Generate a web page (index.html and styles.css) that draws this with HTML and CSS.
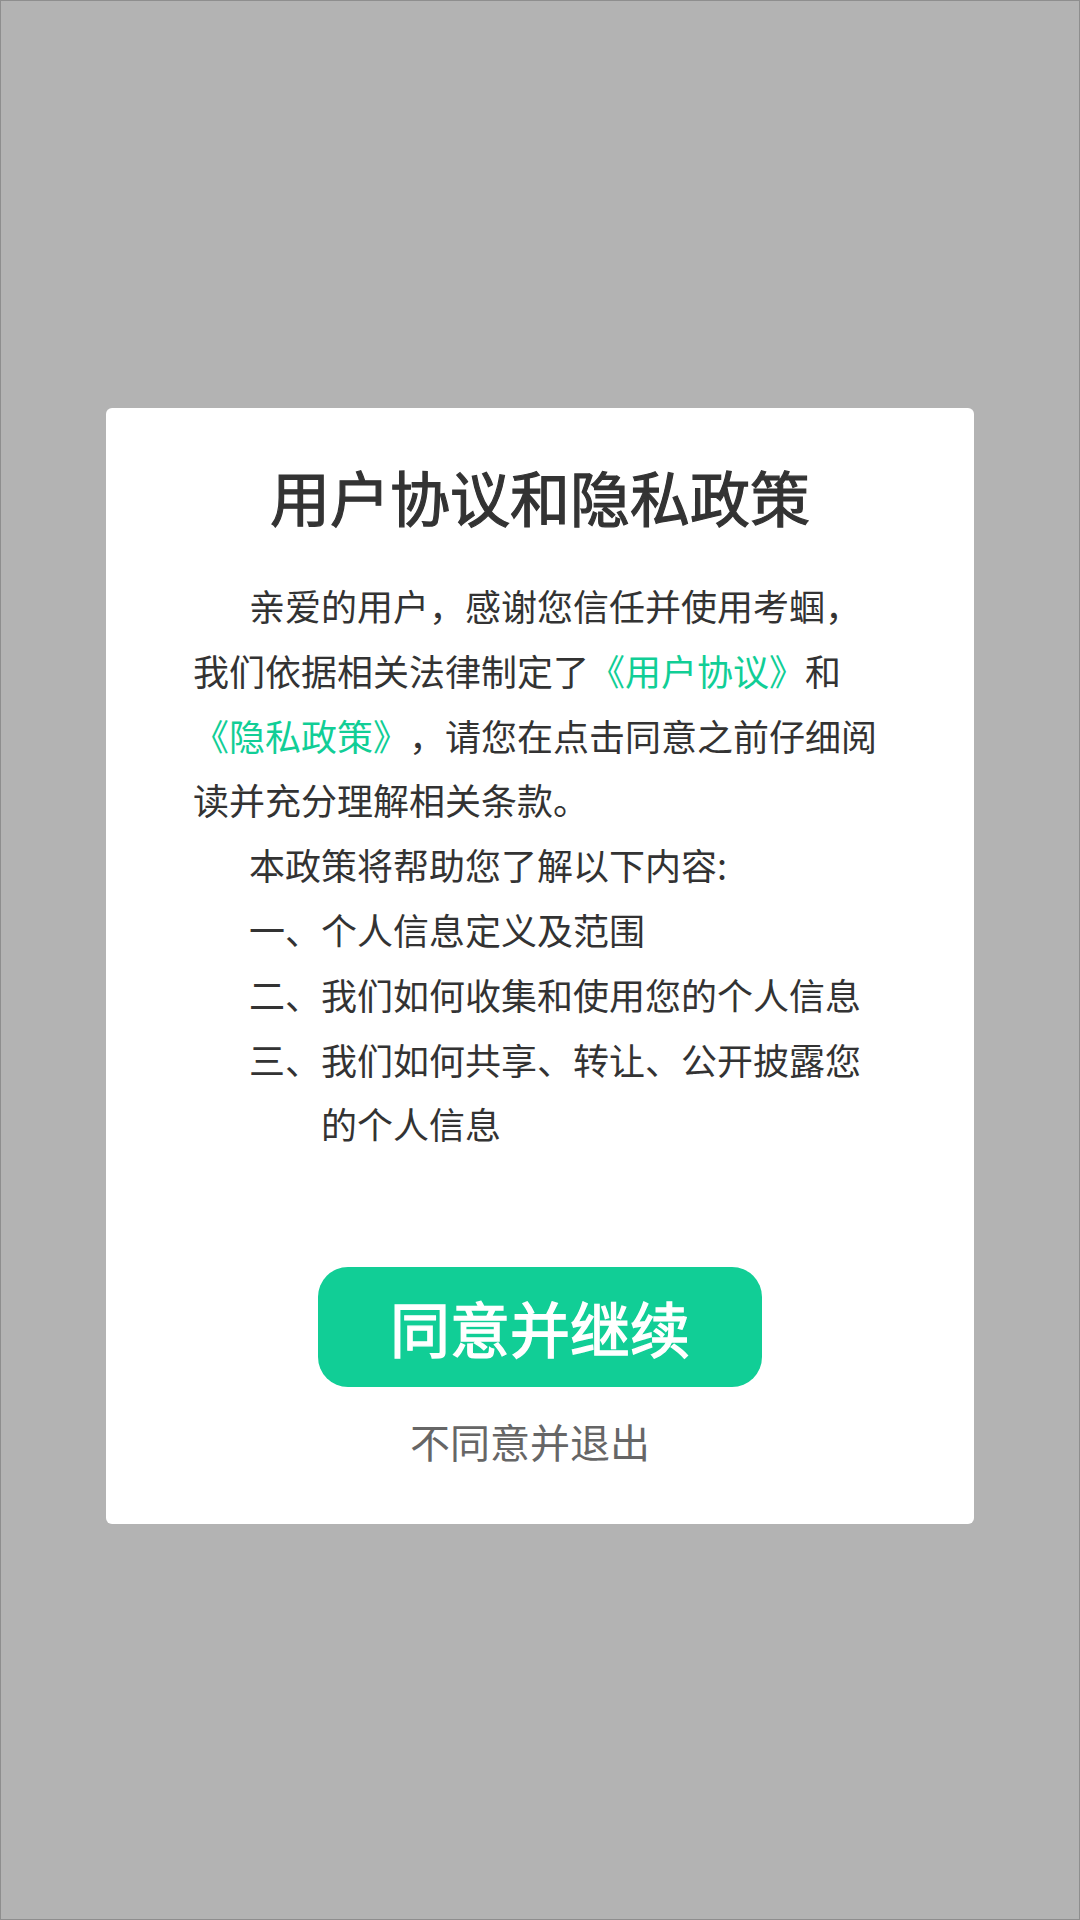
FILE: index.html
```html
<!DOCTYPE html>
<html lang="zh-CN">
<head>
<meta charset="utf-8">
<title>用户协议和隐私政策</title>
<link rel="stylesheet" href="styles.css">
</head>
<body>
<div class="screen">
  <div class="dialog">
    <h1 class="dialog-title">用户协议和隐私政策</h1>
    <div class="dialog-body">
      <p class="para">亲爱的用户，感谢您信任并使用考蝈，我们依据相关法律制定了<span class="link">《用户协议》</span>和<span class="link">《隐私政策》</span>，请您在点击同意之前仔细阅读并充分理解相关条款。</p>
      <p class="para">本政策将帮助您了解以下内容:</p>
      <p class="item">一、个人信息定义及范围</p>
      <p class="item">二、我们如何收集和使用您的个人信息</p>
      <p class="item">三、我们如何共享、转让、公开披露您的个人信息</p>
    </div>
    <button class="btn-agree" type="button">同意并继续</button>
    <div class="btn-decline">不同意并退出</div>
  </div>
</div>
</body>
</html>
```

FILE: styles.css
```css
html, body {
  margin: 0;
  padding: 0;
}

body {
  width: 1080px;
  height: 1920px;
  font-family: "Noto Sans CJK SC", "Noto Sans", sans-serif;
  color: #333333;
  text-spacing-trim: space-all;
}

.screen {
  box-sizing: border-box;
  width: 1080px;
  height: 1920px;
  background: #b3b3b3;
  border: 1px solid #8e8e8e;
  padding-top: 407px;
  display: flex;
  flex-direction: column;
  align-items: center;
}

.dialog {
  box-sizing: border-box;
  width: 868px;
  background: #ffffff;
  border-radius: 6px;
  padding: 46px 87px 55px;
  display: flex;
  flex-direction: column;
  align-items: center;
}

.dialog-title {
  margin: 0;
  font-size: 60px;
  line-height: 84px;
  font-weight: 400;
  -webkit-text-stroke: 1.2px #333333;
  color: #333333;
  text-align: center;
  white-space: nowrap;
}

.dialog-body {
  align-self: stretch;
  margin-top: 35px;
  font-size: 36px;
  line-height: 64.8px;
  color: #333333;
  text-spacing-trim: space-all;
}

.para {
  margin: 0;
  text-indent: 56px;
}

.item {
  margin: 0;
  padding-left: 128px;
  text-indent: -72px;
}

.link {
  color: #11ce96;
}

.btn-agree {
  margin-top: 111px;
  width: 444px;
  height: 120px;
  border: none;
  border-radius: 30px;
  background: #11ce96;
  color: #ffffff;
  font-family: "Noto Sans CJK SC", "Noto Sans", sans-serif;
  font-size: 60px;
  font-weight: 400;
  -webkit-text-stroke: 1.4px #ffffff;
  line-height: 1;
  padding: 0;
  cursor: pointer;
}

.btn-decline {
  margin-top: 26px;
  padding-right: 20px;
  font-size: 40px;
  line-height: 56px;
  color: #666666;
}
```
